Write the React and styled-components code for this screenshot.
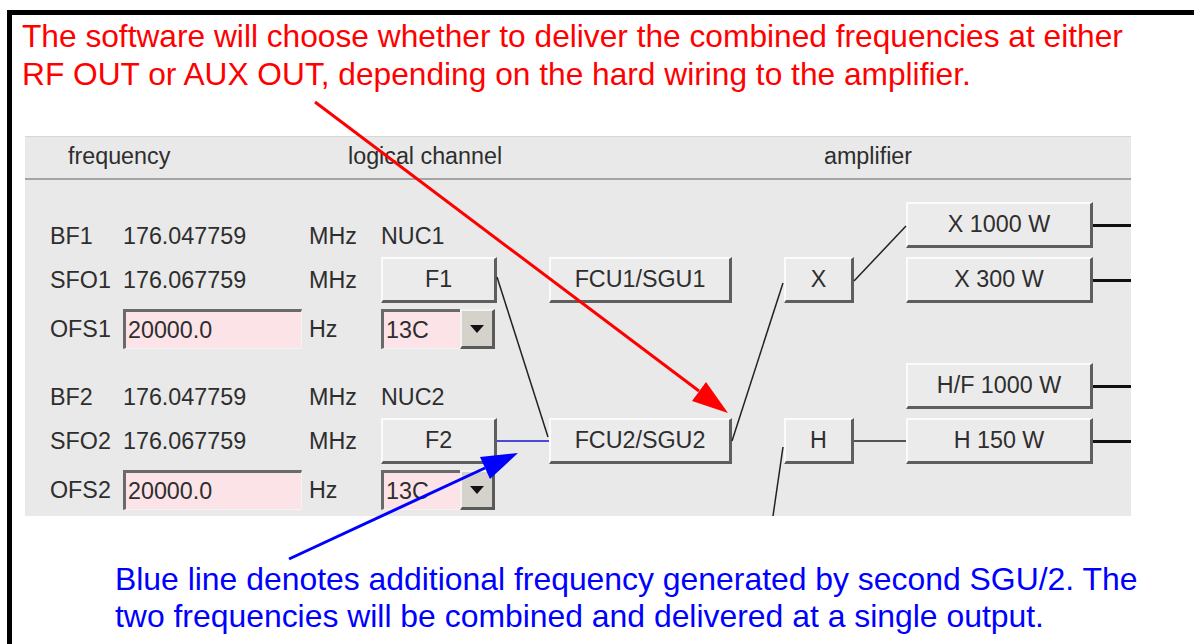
import React from 'react';
import styled, { createGlobalStyle } from 'styled-components';

const Global = createGlobalStyle`
  html, body { margin: 0; padding: 0; background: #fff; }
  body { font-family: "Liberation Sans", Arial, sans-serif; }
`

const Page = styled.div`
  position: relative;
  width: 1194px;
  height: 644px;
  overflow: hidden;
  background: #fff;
`

const Frame = styled.div`
  box-sizing: border-box;
  margin: 10px 0 0 7px;
  height: 634px;
  border-top: 5px solid #000;
  border-left: 5px solid #000;
  padding: 2px 0 0 10px;
`

const Note = styled.p`
  margin: 0;
  margin-left: ${p => p.$indent || 0}px;
  margin-top: ${p => p.$top || 0}px;
  font-size: ${p => p.$size || 31.7}px;
  line-height: ${p => p.$lh || 38}px;
  color: ${p => p.$color};
  white-space: nowrap;
`

const Panel = styled.div`
  box-sizing: border-box;
  width: 1106px;
  margin: 43px 0 0 3px;
  background: #e9e9e9;
  border-top: 1px solid #d6d6d6;
  color: #2e2e2e;
  font-size: 23.3px;
`

const Header = styled.div`
  display: grid;
  grid-template-columns: 280px 476px 1fr;
  align-items: center;
  height: 43px;
  padding: 0 0 2px 43px;
  box-sizing: border-box;
  border-bottom: 2px solid #a4a4a4;
`

const Body = styled.div`
  position: relative;
  box-sizing: border-box;
  height: 336px;
  display: flex;
  gap: 52px;
  padding: 20px 0 0 25px;
`

const Table = styled.div`
  display: flex;
  flex-direction: column;
  gap: 33px;
  padding-top: 21px;
`

const Group = styled.div`
  display: grid;
  grid-template-columns: 73px 186px 72px 116px;
  grid-template-rows: 30px 46px 40px;
  row-gap: 6px;
  align-items: center;
`

const Cell = styled.span`
  white-space: nowrap;
  line-height: 26px;
`

const Button = styled.div`
  box-sizing: border-box;
  display: flex;
  align-items: center;
  justify-content: center;
  width: ${p => p.$w ? `${p.$w}px` : '100%'};
  height: 46px;
  background: #ebebeb;
  border-style: solid;
  border-width: 2px 3px 3px 2px;
  border-color: #fbfbfb #5e5e5e #5e5e5e #fbfbfb;
  color: #2e2e2e;
  white-space: nowrap;
`

const Field = styled.div`
  box-sizing: border-box;
  width: ${p => p.$w}px;
  height: 40px;
  display: flex;
  align-items: center;
  padding-left: 2px;
  background: #fbe3e7;
  border-top: 3px solid #6a6a6a;
  border-left: 3px solid #6a6a6a;
  border-right: 1px solid #f3f3f3;
  border-bottom: 1px solid #f3f3f3;
`

const Select = styled.div`
  display: flex;
  width: 114px;
  height: 40px;
`

const SelectValue = styled(Field)`
  flex: 1;
  border-right: none;
`

const SelectArrow = styled.div`
  box-sizing: border-box;
  width: 35px;
  height: 40px;
  display: flex;
  align-items: center;
  justify-content: center;
  background: #d5d2cb;
  border-style: solid;
  border-width: 2px 3px 3px 2px;
  border-color: #f4f3f0 #5a5a5a #5a5a5a #f4f3f0;

  &::after {
    content: '';
    border-left: 7px solid transparent;
    border-right: 7px solid transparent;
    border-top: 8px solid #111;
  }
`

const Lane = styled.div`
  display: flex;
  flex-direction: column;
  gap: ${p => p.$gap}px;
  padding-top: ${p => p.$top}px;
  width: ${p => p.$w ? `${p.$w}px` : 'auto'};
  flex: ${p => p.$w ? 'none' : 1};
`

const AmpGroup = styled.div`
  display: flex;
  flex-direction: column;
  gap: 9px;
`

const AmpRow = styled.div`
  display: flex;
  align-items: center;
`

const Stub = styled.div`
  flex: 1;
  height: 3px;
  background: #111;
`

const Wires = styled.svg`
  position: absolute;
  left: 0;
  top: 0;
  pointer-events: none;
`

const Arrows = styled.svg`
  position: absolute;
  left: 0;
  top: 0;
  pointer-events: none;
`

const channels = [
  { n: 1, nuc: 'NUC1', btn: 'F1' },
  { n: 2, nuc: 'NUC2', btn: 'F2' },
]

const ChannelGroup = ({ n, nuc, btn }) => (
  <Group>
    <Cell>BF{n}</Cell>
    <Cell>176.047759</Cell>
    <Cell>MHz</Cell>
    <Cell>{nuc}</Cell>
    <Cell>SFO{n}</Cell>
    <Cell>176.067759</Cell>
    <Cell>MHz</Cell>
    <Button>{btn}</Button>
    <Cell>OFS{n}</Cell>
    <Field $w={179}>20000.0</Field>
    <Cell>Hz</Cell>
    <Select>
      <SelectValue>13C</SelectValue>
      <SelectArrow />
    </Select>
  </Group>
)

const Amp = ({ children }) => (
  <AmpRow>
    <Button $w={187}>{children}</Button>
    <Stub />
  </AmpRow>
)

export default function App() {
  return (
    <Page>
      <Global />
      <Frame>
        <Note $color="#ff0000">
          The software will choose whether to deliver the combined frequencies at either<br />
          RF OUT or AUX OUT, depending on the hard wiring to the amplifier.
        </Note>
        <Panel>
          <Header>
            <span>frequency</span>
            <span>logical channel</span>
            <span>amplifier</span>
          </Header>
          <Body>
            <Table>
              {channels.map(c => <ChannelGroup key={c.n} {...c} />)}
            </Table>
            <Lane $w={183} $top={57} $gap={115}>
              <Button>FCU1/SGU1</Button>
              <Button>FCU2/SGU2</Button>
            </Lane>
            <Lane $w={70} $top={57} $gap={115}>
              <Button>X</Button>
              <Button>H</Button>
            </Lane>
            <Lane $top={2} $gap={60}>
              <AmpGroup>
                <Amp>X 1000 W</Amp>
                <Amp>X 300 W</Amp>
              </AmpGroup>
              <AmpGroup>
                <Amp>H/F 1000 W</Amp>
                <Amp>H 150 W</Amp>
              </AmpGroup>
            </Lane>
            <Wires width="1106" height="336" viewBox="0 0 1106 336">
              <g stroke="#222" strokeWidth="1.5" fill="none">
                <line x1="472" y1="97" x2="523" y2="257" />
                <line x1="707" y1="261" x2="758" y2="103" />
                <line x1="829" y1="101" x2="881" y2="46" />
                <line x1="758" y1="267" x2="748" y2="336" />
                <line x1="829" y1="261" x2="881" y2="261" />
              </g>
              <line x1="472" y1="261" x2="524" y2="261" stroke="#4a4ad8" strokeWidth="2" />
            </Wires>
          </Body>
        </Panel>
        <Note $color="#0000ff" $indent={93} $top={45} $lh={37} $size={31.9}>
          Blue line denotes additional frequency generated by second SGU/2. The<br />
          two frequencies will be combined and delivered at a single output.
        </Note>
      </Frame>
      <Arrows width="1194" height="644" viewBox="0 0 1194 644">
        <line x1="315" y1="102" x2="699" y2="391" stroke="#ff0000" strokeWidth="3" />
        <polygon points="728,413 692,401 706,382" fill="#ff0000" />
        <line x1="289" y1="559" x2="485" y2="468" stroke="#0000ff" strokeWidth="3" />
        <polygon points="518,453 490,479 480,457" fill="#0000ff" />
      </Arrows>
    </Page>
  );
}
